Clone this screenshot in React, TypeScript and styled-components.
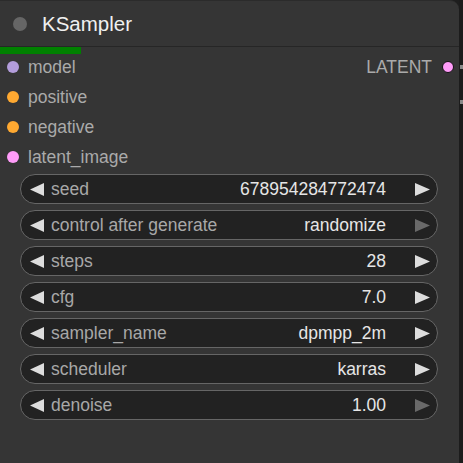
import React from "react"
import styled, { createGlobalStyle } from "styled-components"

const GlobalStyle = createGlobalStyle`
  html, body {
    margin: 0;
    padding: 0;
    background: #1e1e1e;
    overflow: hidden;
  }

  body {
    font-family: "Liberation Sans", Arial, sans-serif;
  }
`

interface Slot {
  name: string,
  colour: string,
}

interface Widget {
  label: string,
  value: string,
  rightDisabled?: boolean,
}

const inputs: Slot[] = [
  { name: "model", colour: "#b39ddb" },
  { name: "positive", colour: "#ffa931" },
  { name: "negative", colour: "#ffa931" },
  { name: "latent_image", colour: "#ff9cf9" },
]

const widgets: Widget[] = [
  { label: "seed", value: "678954284772474" },
  { label: "control after generate", value: "randomize", rightDisabled: true },
  { label: "steps", value: "28" },
  { label: "cfg", value: "7.0" },
  { label: "sampler_name", value: "dpmpp_2m" },
  { label: "scheduler", value: "karras" },
  { label: "denoise", value: "1.00", rightDisabled: true },
]

export default function App() {
  return (
    <Canvas>
      <GlobalStyle/>
      <Node>
        <TitleBar>
          <TitleDot/>
          <Title>KSampler</Title>
          <Progress/>
        </TitleBar>
        <Slots>
          {inputs.map((input, i) => (
            <SlotRow key={input.name}>
              <InputSlot>
                <Dot colour={input.colour}/>
                <SlotLabel>{input.name}</SlotLabel>
              </InputSlot>
              {i === 0 && (
                <OutputSlot>
                  <SlotLabel>LATENT</SlotLabel>
                  <Dot colour="#ff9cf9" outlined/>
                </OutputSlot>
              )}
            </SlotRow>
          ))}
        </Slots>
        <Widgets>
          {widgets.map(w => (
            <WidgetPill key={w.label}>
              <Arrow direction="left"/>
              <WidgetLabel>{w.label}</WidgetLabel>
              <WidgetValue>{w.value}</WidgetValue>
              <Arrow direction="right" disabled={w.rightDisabled}/>
            </WidgetPill>
          ))}
        </Widgets>
      </Node>
      <Wires>
        <svg width="4" height="463" viewBox="0 0 4 463">
          <rect x="1" y="65" width="3" height="4" fill="#8a8a8a"/>
          <rect x="1" y="100" width="3" height="4" fill="#8a8a8a"/>
        </svg>
      </Wires>
    </Canvas>
  )
}

function Arrow({ direction, disabled }: { direction: "left" | "right", disabled?: boolean }) {
  const points = direction === "left" ? "14,0 14,13 0,6.5" : "0,0 0,13 15,6.5"
  return (
    <ArrowIcon width="15" height="13" viewBox="0 0 15 13">
      <polygon points={points} fill={disabled ? "#6a6a6a" : "#dddddd"}/>
    </ArrowIcon>
  )
}

const Canvas = styled.div`
  display: flex;
  height: 463px;
  width: 463px;
`

const Node = styled.div`
  background: #353535;
  border-top: 1px solid #2b2b2b;
  border-top-right-radius: 9px;
  box-sizing: border-box;
  display: flex;
  flex-direction: column;
  height: 463px;
  width: 459px;
`

const TitleBar = styled.div`
  align-items: center;
  border-bottom: 1px solid #262626;
  display: flex;
  gap: 15px;
  height: 45px;
  padding-left: 13px;
  position: relative;
`

const TitleDot = styled.span`
  background: #666666;
  border-radius: 50%;
  height: 14px;
  width: 14px;
`

const Title = styled.span`
  color: #f0f0f0;
  font-size: 20.5px;
  padding-top: 1px;
`

const Progress = styled.div`
  background: #008000;
  bottom: -8px;
  height: 7px;
  left: 0;
  position: absolute;
  width: 81px;
`

const Slots = styled.div`
  display: flex;
  flex-direction: column;
  padding-top: 5px;
`

const SlotRow = styled.div`
  align-items: center;
  display: flex;
  height: 30px;
  justify-content: space-between;
`

const InputSlot = styled.div`
  align-items: center;
  display: flex;
  gap: 9px;
  padding-left: 7px;
`

const OutputSlot = styled.div`
  align-items: center;
  display: flex;
  gap: 10px;
  padding-right: 5px;
`

const Dot = styled.span<{ colour: string, outlined?: boolean }>`
  background: ${({ colour }) => colour};
  border: ${({ outlined }) => outlined ? "1.5px solid #111" : "none"};
  border-radius: 50%;
  box-sizing: border-box;
  height: 12px;
  width: 12px;
`

const SlotLabel = styled.span`
  color: #aaaaaa;
  font-size: 17.5px;
`

const Widgets = styled.div`
  display: flex;
  flex-direction: column;
  gap: 6px;
  padding: 2px 21px 0 20px;
`

const WidgetPill = styled.div`
  align-items: center;
  background: #222222;
  border: 1px solid #666666;
  border-radius: 15px;
  box-sizing: border-box;
  display: flex;
  height: 30px;
  padding: 0 7px 0 9px;
`

const ArrowIcon = styled.svg`
  flex-shrink: 0;
`

const WidgetLabel = styled.span`
  color: #a8a8a8;
  flex: 1;
  font-size: 17.5px;
  margin-left: 6px;
`

const WidgetValue = styled.span`
  color: #e6e6e6;
  font-size: 17.5px;
  margin-right: 29px;
`

const Wires = styled.div`
  background: #1c1c1c;
  flex: 1;
`
